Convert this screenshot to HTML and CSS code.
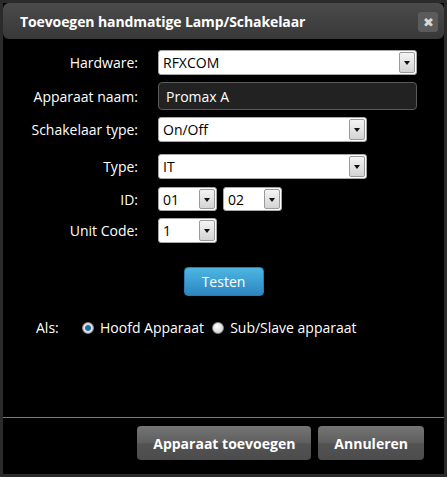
FILE: index.html
```html
<!DOCTYPE html>
<html lang="nl">
<head>
  <meta charset="UTF-8">
  <title>Toevoegen handmatige Lamp/Schakelaar</title>
  <link rel="stylesheet" href="styles.css">
</head>
<body>
  <div class="dialog">
    <div class="titlebar">
      <span class="title">Toevoegen handmatige Lamp/Schakelaar</span>
      <span class="close">&#x2716;</span>
    </div>

    <div class="content">
      <div class="row r-hw">
        <label>Hardware:</label>
        <div class="select w-full"><span>RFXCOM</span><i class="arrow"></i></div>
      </div>
      <div class="row r-name">
        <label>Apparaat naam:</label>
        <div class="text-input">Promax A</div>
      </div>
      <div class="row r-switch">
        <label>Schakelaar type:</label>
        <div class="select w-mid"><span>On/Off</span><i class="arrow"></i></div>
      </div>
      <div class="row r-type">
        <label>Type:</label>
        <div class="select w-mid"><span>IT</span><i class="arrow"></i></div>
      </div>
      <div class="row r-id">
        <label>ID:</label>
        <div class="select w-small"><span>01</span><i class="arrow"></i></div>
        <div class="select w-small"><span>02</span><i class="arrow"></i></div>
      </div>
      <div class="row r-unit">
        <label>Unit Code:</label>
        <div class="select w-small"><span>1</span><i class="arrow"></i></div>
      </div>

      <div class="test-wrap">
        <button class="btn-blue">Testen</button>
      </div>

      <div class="als">
        <span class="als-label">Als:</span>
        <span class="radio checked"></span><span class="opt">Hoofd Apparaat</span>
        <span class="radio"></span><span class="opt">Sub/Slave apparaat</span>
      </div>
    </div>

    <div class="footer">
      <button class="btn-gray">Apparaat toevoegen</button>
      <button class="btn-gray">Annuleren</button>
    </div>
  </div>
</body>
</html>
```

FILE: styles.css
```css
*, *::before, *::after { box-sizing: border-box; margin: 0; padding: 0; }
html, body { background: #000; }
body { font-family: "Open Sans", Arial, sans-serif; color: #fff; }

.dialog { width: 447px; height: 477px; border: 3px solid #2b2b2b; background: #000; display: flex; flex-direction: column; }

.titlebar { height: 36px; border-radius: 6px; background: linear-gradient(#4b4b4b, #383838); display: flex; align-items: center; justify-content: space-between; padding: 0 6px 0 17px; }
.title { font-weight: bold; font-size: 14px; letter-spacing: -0.1px; color: #fff; }
.close { width: 20px; height: 20px; border-radius: 3px; background: #5b5b5b; color: #d8d8d8; font-size: 13px; display: flex; align-items: center; justify-content: center; margin-top: 2px; }

.content { flex: 1; padding-top: 11px; }
.row { display: flex; align-items: center; }
.row label { width: 135px; text-align: right; margin-right: 20px; font-size: 14px; color: #fff; }
.r-name, .r-switch { margin-top: 7px; }
.r-type { margin-top: 12px; }
.r-id { margin-top: 8px; }
.r-unit { margin-top: 7px; }

.select { height: 25px; background: #fff; border: 1px solid #a8a8a8; border-radius: 3px; display: flex; align-items: center; justify-content: space-between; padding-left: 4px; color: #000; font-size: 14px; }
.r-id .select { height: 24px; }
.r-id .select + .select { margin-left: 6px; }
.select .arrow { width: 16px; height: 21px; margin-right: 1px; border: 1px solid #9a9a9a; border-radius: 2px; background: linear-gradient(#f4f4f4, #d4d4d4); position: relative; }
.r-id .select .arrow { height: 20px; }
.select .arrow::after { content: ""; position: absolute; left: 4px; top: 8px; border-left: 3.5px solid transparent; border-right: 3.5px solid transparent; border-top: 4px solid #111; }
.w-full { width: 259px; }
.w-mid { width: 209px; }
.w-small { width: 59px; }

.text-input { width: 259px; height: 28px; background: #222; border: 1px solid #5a5a5a; border-radius: 4px; padding-left: 7px; display: flex; align-items: center; font-size: 14px; color: #fff; }

.test-wrap { display: flex; justify-content: center; margin-top: 24px; }
.btn-blue { width: 80px; height: 29px; border: 1px solid #2a7db4; border-radius: 4px; background: linear-gradient(#4db6e2, #2c86c2); color: #fff; font-family: "Open Sans", Arial, sans-serif; font-size: 14px; }

.als { display: flex; align-items: center; margin-top: 22px; padding-left: 33px; font-size: 14px; }
.als-label { width: 46px; }
.radio { width: 12px; height: 12px; border-radius: 50%; border: 1px solid #888; background: radial-gradient(circle at 40% 35%, #fff, #c8c8c8); margin-right: 6px; }
.radio.checked { background: radial-gradient(circle, #1f6ea6 0 2.5px, #6fb6e6 3px, #e8e8e8 3.6px, #bcbcbc); }
.opt { margin-right: 8px; }

.footer { height: 57px; border-top: 1px solid #7a7a7a; display: flex; justify-content: flex-end; align-items: flex-start; gap: 7px; padding: 8px 20px 0 0; }
.btn-gray { height: 34px; padding: 0 16px; border: none; border-radius: 4px; background: linear-gradient(#757575, #5e5e5e 50%, #535353 52%, #4c4c4c); color: #fff; font-family: "Open Sans", Arial, sans-serif; font-weight: bold; font-size: 14px; }
```
